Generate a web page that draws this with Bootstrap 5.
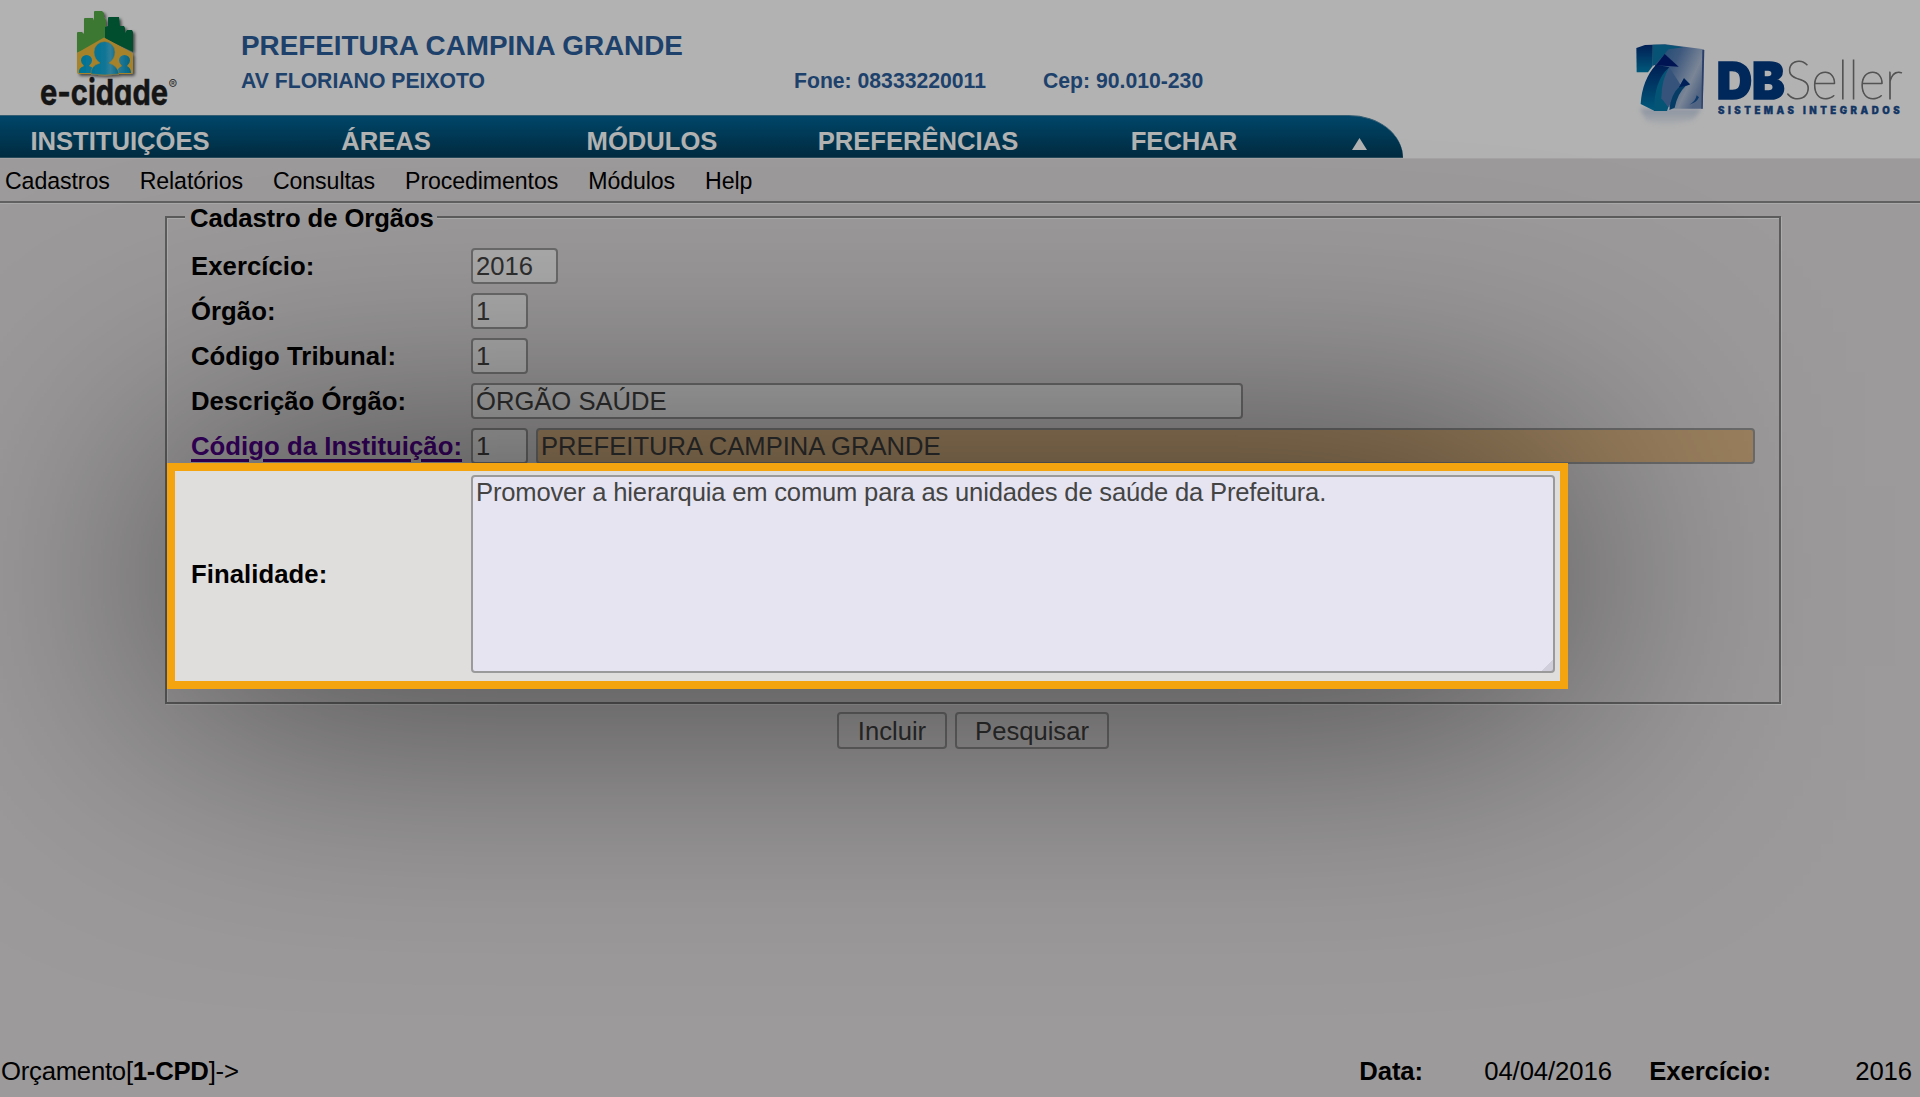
<!DOCTYPE html>
<html lang="pt-BR">
<head>
<meta charset="utf-8">
<title>e-cidade - Cadastro de Orgãos</title>
<link href="https://cdn.jsdelivr.net/npm/bootstrap@5.3.0/dist/css/bootstrap.min.css" rel="stylesheet">
<style>
  body { font-family: "Liberation Sans", Arial, sans-serif; background: #e0dddd; color: #000; height: 1097px; overflow: hidden; font-size: 25.7px; line-height: 30px; }
  .site-head { height: 159px; background: #fff; border-bottom: 1px solid #eceaea; }
  .brand-row { height: 115px; }
  .ecid-logo { width: 241px; height: 115px; }
  .inst { color: #2c5d9b; font-weight: bold; padding-top: 29px; }
  .inst-name { font-size: 27.85px; line-height: 34px; }
  .inst-info { font-size: 21.2px; line-height: 24px; margin-top: 6px; }
  .inst-info .street { width: 553px; }
  .inst-info .phone { width: 249px; }
  .dbs-logo { width: 300px; height: 100px; margin-top: 30px; }
  .main-nav { width: 1403px; height: 43px; background: linear-gradient(#006496, #003f5d); border-top: 1px solid #4c86a4; border-bottom: 1px solid #386b82; border-radius: 0 54px 0 0 / 0 43px 0 0; }
  .main-nav a { width: 266px; color: #fff; font-weight: bold; font-size: 25.6px; line-height: 50px; height: 41px; text-align: center; text-decoration: none; }
  .main-nav a:first-child { width: 253px; padding-right: 13px; }
  .up-mark { margin: 22px 0 0 35px; width: 15px; height: 12px; }
  .sub-nav { height: 44px; padding-left: 5px; gap: 30px; border-bottom: 2px solid #8b8b8b; box-shadow: 0 1px 0 #f2f2f2; font-size: 23.15px; letter-spacing: -.09px; line-height: 44px; }
  .sub-nav a { color: #000; text-decoration: none; }
  .panel-wrap { width: 1616px; margin-left: 165px; padding-top: 1px; }
  .frame { height: 488px; padding: 0 20px 0 24px; margin-top: 12px; border: 2px solid #858585; box-shadow: 1px 1px 0 #f6f6f6, inset 1px 1px 0 #f6f6f6; }
  .frame-title { background: #e0dddd; width: 252px; height: 26px; line-height: 26px; margin: -13px 0 0 -6px; padding-left: 5px; white-space: nowrap; font-weight: bold; letter-spacing: -.1px; }
  .lines { padding-top: 17px; }
  .line { height: 36px; margin-bottom: 9px; }
  .line .tag { width: 280px; font-weight: bold; white-space: nowrap; color: #000; flex: none; letter-spacing: .06px; }
  .line .tag a { color: #51008c; text-decoration: underline; text-decoration-thickness: 3px; text-underline-offset: 4px; }
  .field { border: 2px solid #9a9a9a; border-radius: 4px; background: #f6f6f6; color: #444; height: 36px; padding: 0 3px; font-size: 25.6px; line-height: 32px; font-family: inherit; outline: 0; }
  .w-year { width: 87px; } .w-code { width: 57px; } .w-desc { width: 772px; }
  .w-inst { width: 1219px; background: #deb887; margin-left: 8px; }
  .area-line { height: 198px; margin-top: 11px; }
  .area { width: 1084px; height: 198px; background: linear-gradient(135deg, transparent 50%, #d0ceda 50%) right bottom / 11px 11px no-repeat #e6e4f1; resize: none; line-height: 29px; padding: 1px 3px; letter-spacing: -.19px; }
  .btn-db { font-size: 25.6px; line-height: 30px; color: #444; background: #e0dddd; border: 2px solid #9a9a9a; border-radius: 4px; height: 37px; padding: 1px 0 0; }
  .btn-inc { width: 110px; } .btn-pesq { width: 154px; }
  /* dimmed page with a hole over the lit row */
  .shade { position: absolute; inset: 0; overflow: hidden; pointer-events: none; z-index: 4; background: rgba(0,0,0,.3);
    clip-path: polygon(evenodd, 0 0, 1920px 0, 1920px 1097px, 0 1097px, 0 0, 170px 466px, 1565px 466px, 1565px 686px, 170px 686px, 170px 466px); }
  .halo { position: absolute; left: 167px; top: 463px; width: 1401px; height: 226px; background: rgba(0,0,0,.68); filter: blur(140px); }
  .spot { position: absolute; left: 167px; top: 463px; width: 1401px; height: 226px; border: 8px solid #f3a40f; pointer-events: none; z-index: 5; }
  .status { height: 41px; line-height: 30px; letter-spacing: -.1px; }
  .crumb { padding-left: 1px; letter-spacing: -.24px; }
  .st-data { width: 125px; } .st-day { width: 165px; } .st-year { width: 206px; }
</style>
<script src="https://cdn.jsdelivr.net/npm/bootstrap@5.3.0/dist/js/bootstrap.bundle.min.js"></script>
</head>
<body class="d-flex flex-column position-relative">
<header class="site-head flex-shrink-0">
  <div class="brand-row d-flex">
    <svg class="ecid-logo flex-shrink-0" viewBox="0 0 241 115">
      <defs><filter id="sh" x="-20%" y="-20%" width="150%" height="150%"><feDropShadow dx="2" dy="2" stdDeviation="1.6" flood-opacity=".6"/></filter>
      <linearGradient id="pp" x1="0" y1="0" x2="1" y2="0"><stop offset="0" stop-color="#00a6d6"/><stop offset=".5" stop-color="#18a9d8"/><stop offset=".7" stop-color="#45b7dc"/><stop offset="1" stop-color="#0090c0"/></linearGradient></defs>
      <g filter="url(#sh)">
        <path fill="#58ac49" d="M77 52V33q0-1 1-1h4l2 2V19q0-1 1-1h8l1 3V12q0-1 1-1h7l2 2v4l2 3v18L77 53z"/>
        <path fill="#006f43" d="M105 38V27l3-1V18q0-1 1-1h10l1 9h4l1 2v5l2-3h5l1 2v20L104 38z"/>
        <path fill="#eebb3c" d="M77 53l27-15.500 29 16V72q0 2-2 2H79q-2 0-2-2z"/>
        <path fill="url(#pp)" d="M79 73q-1-5 5-7-3-2.500-3-5.500a5.500 5.500 0 0 1 11 0q0 3-3 5.500 6 2 6 7zM117 73q0-5 5-7-3-2.500-3-5.500a5.500 5.500 0 0 1 11 0q0 3-3 5.500 4 2 4 7z"/>
        <path fill="url(#pp)" stroke="#d8b040" stroke-width=".6" d="M91 74q-1-8 9-11-6-4-6-11a10.500 10.500 0 0 1 21 0q0 7-6 11 9 3 10 11-14 2-28 0z"/>
      </g>
      <text x="40" y="104.500" font-family="Inter, sans-serif" font-size="35.500" font-weight="650" fill="#1f1f1f" stroke="#1f1f1f" stroke-width=".5" textLength="128" lengthAdjust="spacingAndGlyphs" style="font-feature-settings:'cv11'">e-cidade</text>
      <text x="168.500" y="89" font-family="Inter, sans-serif" font-size="13" fill="#4c4c4c">®</text>
    </svg>
    <div class="inst flex-grow-1">
      <div class="inst-name">PREFEITURA CAMPINA GRANDE</div>
      <div class="inst-info d-flex"><span class="street">AV FLORIANO PEIXOTO</span><span class="phone">Fone: 08333220011</span><span>Cep: 90.010-230</span></div>
    </div>
    <svg class="dbs-logo flex-shrink-0" viewBox="0 0 900 300">
      <defs>
        <linearGradient id="face" x1="0" y1="0" x2="1" y2=".6"><stop offset="0" stop-color="#1e66a0"/><stop offset=".45" stop-color="#5a80b5"/><stop offset=".8" stop-color="#b0c0d8"/><stop offset="1" stop-color="#7590bb"/></linearGradient>
        <linearGradient id="side" x1="0" y1="0" x2="0" y2="1"><stop offset="0" stop-color="#002c78"/><stop offset="1" stop-color="#0080b0"/></linearGradient>
        <linearGradient id="glow" x1="0" y1="0" x2="0" y2="1"><stop offset="0" stop-color="#6f8fc0" stop-opacity=".4"/><stop offset="1" stop-color="#6f8fc0" stop-opacity="0"/></linearGradient>
        <filter id="soft"><feGaussianBlur stdDeviation="6"/></filter>
      </defs>
      <path d="M60 236H245L220 270 140 290 80 275z" fill="url(#glow)" filter="url(#soft)"/>
      <path d="M98 44L135 43 252 58 248 236H160L145 230 105 105 98 108z" fill="url(#face)"/>
      <path d="M247 60h6l-5 176h-4z" fill="#3c5a98"/>
      <path d="M98 44h37l55 8-45 6-12 15-30 32h-5z" fill="#0a77a8"/>
      <path d="M49 54L75 45 98 44V108L84 127H50z" fill="url(#side)"/>
      <path d="M108 104L148 112Q112 150 104 243L62 222Q66 150 108 104z" fill="url(#side)"/>
      <path d="M148 112Q122 160 145 232L141 243H102Q102 150 148 112z" fill="#0779aa"/>
      <path d="M134 72L176 110 108 106z" fill="#001c78"/>
      <path d="M148 112Q124 150 124 205L145 232 178 180 182 165z" fill="#4e79b0"/>
      <path d="M192 145L210 162 197 168Q173 190 164 233L148 240Q152 193 178 170z" fill="#075792"/>
      <path d="M192 145L210 164 177 172z" fill="#002d80"/>
      <path d="M230 196q-3 18-22 28 22-6 29-22z" fill="#16559a"/>
      <text x="290" y="208" font-family="Inter, sans-serif" font-size="151" font-weight="900" fill="#003a82" stroke="#003a82" stroke-width="5" textLength="204" lengthAdjust="spacingAndGlyphs">DB</text>
      <text x="494" y="208" font-family="Lato, Inter, sans-serif" font-size="164" font-weight="100" fill="#777" stroke="#777" stroke-width="3" textLength="354" lengthAdjust="spacingAndGlyphs">Seller</text>
      <text x="294" y="251" font-family="Inter, sans-serif" font-size="29" font-weight="900" fill="#1b4e90" stroke="#1b4e90" textLength="545">SISTEMAS INTEGRADOS</text>
    </svg>
  </div>
  <nav class="main-nav d-flex">
    <a href="#">INSTITUIÇÕES</a><a href="#">ÁREAS</a><a href="#">MÓDULOS</a><a href="#">PREFERÊNCIAS</a><a href="#">FECHAR</a>
    <svg class="up-mark" viewBox="0 0 15 12"><path d="M7.500 0L15 12H0z" fill="#fff"/></svg>
  </nav>
</header>
<nav class="sub-nav d-flex flex-shrink-0">
  <a href="#">Cadastros</a><a href="#">Relatórios</a><a href="#">Consultas</a><a href="#">Procedimentos</a><a href="#">Módulos</a><a href="#">Help</a>
</nav>
<main class="panel-wrap flex-grow-1">
  <section class="frame">
    <div class="frame-title">Cadastro de Orgãos</div>
    <div class="lines">
      <div class="line d-flex align-items-center"><label class="tag">Exercício:</label><input class="field w-year" value="2016"></div>
      <div class="line d-flex align-items-center"><label class="tag">Órgão:</label><input class="field w-code" value="1"></div>
      <div class="line d-flex align-items-center"><label class="tag">Código Tribunal:</label><input class="field w-code" value="1"></div>
      <div class="line d-flex align-items-center"><label class="tag">Descrição Órgão:</label><input class="field w-desc" value="ÓRGÃO SAÚDE"></div>
      <div class="line d-flex align-items-center"><label class="tag"><a href="#">Código da Instituição:</a></label><input class="field w-code" value="1"><input class="field w-inst" value="PREFEITURA CAMPINA GRANDE" readonly></div>
      <div class="line area-line d-flex align-items-center"><label class="tag">Finalidade:</label><textarea class="field area">Promover a hierarquia em comum para as unidades de saúde da Prefeitura.</textarea></div>
    </div>
  </section>
  <div class="d-flex justify-content-center mt-2 gap-2">
    <button class="btn-db btn-inc">Incluir</button>
    <button class="btn-db btn-pesq">Pesquisar</button>
  </div>
</main>
<footer class="status d-flex flex-shrink-0 justify-content-between">
  <div class="crumb">Orçamento[<b>1-CPD</b>]-&gt;</div>
  <div class="d-flex pe-2"><b class="st-data">Data:</b><span class="st-day">04/04/2016</span><b class="st-year">Exercício:</b><span>2016</span></div>
</footer>
<div class="shade"><div class="halo"></div></div>
<div class="spot"></div>
</body>
</html>
